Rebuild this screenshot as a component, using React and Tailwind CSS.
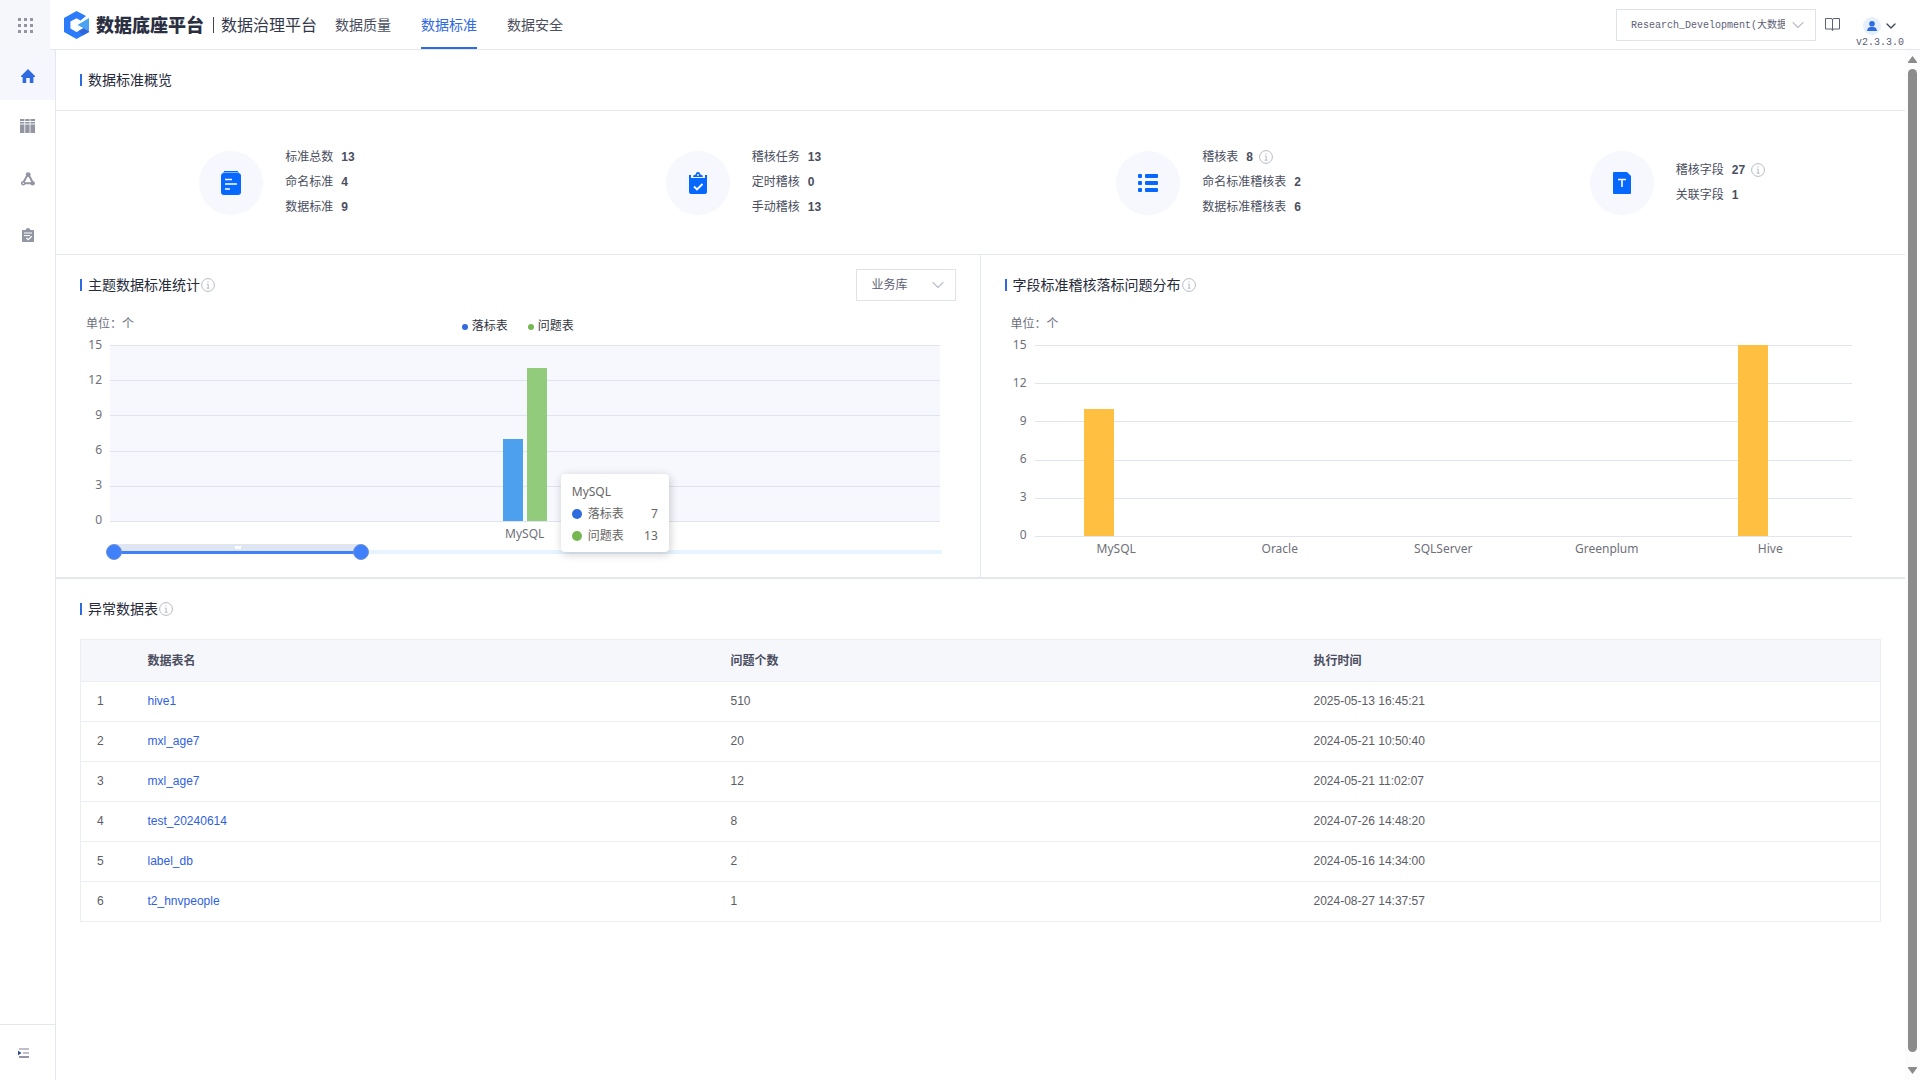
import React, { useState } from 'react';
import { ChevronDown } from 'lucide-react';

const navItems = ['数据质量', '数据标准', '数据安全'];

const themeSeries = [
  { name: '落标表', value: 7, dot: 'bg-[#2f6adf]', bar: 'bg-[#4ca0ee]' },
  { name: '问题表', value: 13, dot: 'bg-[#76b752]', bar: 'bg-[#91cb7b]' }
];

const issueData = [
  { name: 'MySQL', value: 10 },
  { name: 'Oracle', value: 0 },
  { name: 'SQLServer', value: 0 },
  { name: 'Greenplum', value: 0 },
  { name: 'Hive', value: 15 }
];

const ticks = [15, 12, 9, 6, 3, 0];
const maxTick = 15;

const tableRows = [
  { name: 'hive1', count: 510, time: '2025-05-13 16:45:21' },
  { name: 'mxl_age7', count: 20, time: '2024-05-21 10:50:40' },
  { name: 'mxl_age7', count: 12, time: '2024-05-21 11:02:07' },
  { name: 'test_20240614', count: 8, time: '2024-07-26 14:48:20' },
  { name: 'label_db', count: 2, time: '2024-05-16 14:34:00' },
  { name: 't2_hnvpeople', count: 1, time: '2024-08-27 14:37:57' }
];

const Logo = () => (
  <svg viewBox="0 0 26 28" className="w-[26px] h-7">
    <path d="M12.5 0 L22 5 L16.5 9.5 L12.5 7.2 L6.4 10.6 V17.6 L12.5 21 L15.5 19.4 L25 20.6 V21 L12.5 28 L0 21 V7 Z" fill="#2b7bfa" />
    <path d="M25 7 V20 L13.5 14 Z" fill="#4aa3f0" />
    <path d="M15 19.6 L19.5 17.1 L25 20 V21 L18.5 24.6 Z" fill="#2f66dc" />
  </svg>
);

const InfoIcon = () => (
  <svg viewBox="0 0 14 14" className="w-3.5 h-3.5 shrink-0" fill="none" stroke="#b7bac4">
    <circle cx="7" cy="7" r="6.4" />
    <path d="M7 3.4 V4.6 M5.8 6.2 H7.2 V10 M5.6 10.2 H8.6" />
  </svg>
);

const DocIcon = () => (
  <svg viewBox="0 0 20 24" className="w-5 h-6">
    <rect x="3" y="0" width="14" height="1.4" fill="#0668ff" />
    <rect x="2" y="1" width="16" height="2" fill="#7fb2ff" />
    <rect x="0" y="2" width="20" height="22" rx="3" fill="#0668ff" />
    <path d="M4 8.5 H11 M4 13 H16 M4 18 H9" stroke="#fff" strokeWidth="1.6" />
  </svg>
);

const TaskIcon = () => (
  <svg viewBox="0 0 18 22" className="w-[18px] h-[22px]">
    <path d="M0 3 H2 V6 H16 V3 H18 V20 Q18 22 16 22 H2 Q0 22 0 20 Z" fill="#0668ff" />
    <path d="M4 5 Q4 2.6 6.6 2.4 Q7 0 9 0 Q11 0 11.4 2.4 Q14 2.6 14 5 Z" fill="#0668ff" />
    <circle cx="9" cy="3" r="0.9" fill="#fff" />
    <path d="M5 14.5 L8 17.5 L13.5 12" fill="none" stroke="#fff" strokeWidth="1.8" />
  </svg>
);

const ListIcon = () => (
  <svg viewBox="0 0 20 18" className="w-5 h-[18px]" fill="#0668ff">
    <rect x="0" y="0" width="4" height="4" rx="1" />
    <rect x="7" y="0" width="13" height="4" rx="1" />
    <rect x="0" y="7" width="4" height="4" rx="1" />
    <rect x="7" y="7" width="13" height="4" rx="1" />
    <rect x="0" y="14" width="4" height="4" rx="1" />
    <rect x="7" y="14" width="13" height="4" rx="1" />
  </svg>
);

const FieldIcon = () => (
  <svg viewBox="0 0 18 22" className="w-[18px] h-[22px]">
    <path d="M1 0 H14 L18 4 V21 Q18 22 17 22 H1 Q0 22 0 21 V1 Q0 0 1 0 Z" fill="#0668ff" />
    <path d="M5 7.5 H13 M9 7.5 V15" stroke="#fff" strokeWidth="1.6" />
  </svg>
);

const HomeIcon = () => (
  <svg viewBox="0 0 14 14" className="w-3.5 h-3.5" fill="#2f6adf">
    <path d="M7 0 L14 7 V8 H12.4 V14 H8.8 V9 H5.2 V14 H1.6 V8 H0 V7 Z" />
  </svg>
);

const ShelfIcon = () => (
  <svg viewBox="0 0 15 14" className="w-[15px] h-3.5">
    <path d="M0 0 H4.4 V14 H0 Z M5.2 0 H9.6 V14 H5.2 Z M10.4 0 H15 V14 H10.4 Z" fill="#9395a3" />
    <path d="M0 2.5 H15 M0 5 H15" stroke="#fff" strokeWidth="0.9" />
  </svg>
);

const NodesIcon = () => (
  <svg viewBox="0 0 14 14" className="w-3.5 h-3.5" fill="none" stroke="#9395a3">
    <path d="M6.5 3 L2.6 10 M7.8 3 L11.2 9.5 M3.5 11.2 H10.5" strokeWidth="2" />
    <circle cx="7.2" cy="2.6" r="2.4" fill="#9395a3" stroke="none" />
    <circle cx="2.2" cy="11.2" r="1.5" fill="#fff" strokeWidth="1.5" />
    <circle cx="11.6" cy="11.2" r="2.3" fill="#9395a3" stroke="none" />
  </svg>
);

const ClipboardIcon = () => (
  <svg viewBox="0 0 12 14" className="w-3 h-3.5">
    <path d="M0 2 H3.6 Q4 0 6 0 Q8 0 8.4 2 H12 V14 H0 Z" fill="#9395a3" />
    <path d="M2 5 H10 M2 7.6 H8" stroke="#fff" />
    <path d="M4.4 10 L6.2 11.6 L9.8 8.2" fill="none" stroke="#fff" strokeWidth="1.2" />
  </svg>
);

const ExpandIcon = () => (
  <svg viewBox="0 0 11 10" className="w-[11px] h-2.5">
    <path d="M1 1 H11 M5 5 H11" stroke="#bfc0cc" strokeWidth="2" />
    <path d="M1 9 H11" stroke="#9395a3" strokeWidth="2" />
    <path d="M0 2.8 L3.6 5 L0 7.2 Z" fill="#2c4a80" />
  </svg>
);

const BookIcon = () => (
  <svg viewBox="0 0 15 13" className="w-[15px] h-[13px]" fill="none" stroke="#5c6075">
    <path d="M0.5 0.5 H6 Q7.5 0.5 7.5 2 Q7.5 0.5 9 0.5 H14.5 V11 H9 Q7.5 11 7.5 12.5 Q7.5 11 6 11 H0.5 Z M7.5 2 V12" />
  </svg>
);

const sideItems = [
  { label: '首页', icon: HomeIcon, className: 'h-[50px] pt-0.5 bg-[#f6f7fd]' },
  { label: '标准库', icon: ShelfIcon, className: 'h-[52px]' },
  { label: '映射', icon: NodesIcon, className: 'h-[54px]' },
  { label: '稽核', icon: ClipboardIcon, className: 'h-[58px]' }
];

const overview = [
  { icon: DocIcon, width: 'w-[94px]', rows: [['标准总数', 13], ['命名标准', 4], ['数据标准', 9]] },
  { icon: TaskIcon, width: 'w-[78px]', rows: [['稽核任务', 13], ['定时稽核', 0], ['手动稽核', 13]] },
  { icon: ListIcon, width: 'w-[101px]', rows: [['稽核表', 8, true], ['命名标准稽核表', 2], ['数据标准稽核表', 6]] },
  { icon: FieldIcon, width: 'w-[86px]', rows: [['稽核字段', 27, true], ['关联字段', 1]] }
];

const SectionTitle = ({ children, info }) => (
  <h2 className="flex items-center text-sm text-[#262a3a]">
    <span className="w-0.5 h-3 bg-[#2f6adf] mr-1.5" />
    <span className="mr-px">{children}</span>
    {info && <InfoIcon />}
  </h2>
);

// Tick labels, grid lines and bars share one row height
const Plot = ({ className, plotClassName, children }) => (
  <div className={`flex ${className}`}>
    <div className="w-[22px] mr-2 -mt-px mb-px flex flex-col justify-between text-right">
      {ticks.map((tick) => (
        <span key={tick} className="h-px flex items-center justify-end">{tick}</span>
      ))}
    </div>
    <div className={`relative flex-1 flex flex-col justify-between ${plotClassName}`}>
      {ticks.map((tick) => (
        <span key={tick} className="h-px bg-[#dfe4ef]" />
      ))}
      {children}
    </div>
  </div>
);

const thumb =
  'absolute inset-x-0 top-0 w-full h-4 m-0 appearance-none bg-transparent pointer-events-none [&::-webkit-slider-thumb]:appearance-none [&::-webkit-slider-thumb]:pointer-events-auto [&::-webkit-slider-thumb]:w-4 [&::-webkit-slider-thumb]:h-4 [&::-webkit-slider-thumb]:rounded-full [&::-webkit-slider-thumb]:bg-[#4080fb] [&::-webkit-slider-thumb]:border [&::-webkit-slider-thumb]:border-[#6f93d2]';

const ThemeChart = () => {
  const [start, setStart] = useState(0);
  const [end, setEnd] = useState(30);

  return (
    <section className="w-1/2 pt-3.5 px-6 pb-[17px] border-r border-[#e4e7ed]">
      <div className="flex items-center justify-between h-8">
        <SectionTitle info>主题数据标准统计</SectionTitle>
        <div className="relative">
          <select
            aria-label="数据库类型"
            className="appearance-none w-[100px] h-8 pl-[15px] pr-8 border border-[#dfe2ea] bg-white text-xs text-[#5c6075]"
          >
            <option>业务库</option>
          </select>
          <ChevronDown className="absolute right-2 top-1.5 w-5 h-5 text-[#b9bfcc] pointer-events-none" strokeWidth={1.3} />
        </div>
      </div>

      <div className="relative mt-3.5 h-[18px] flex items-center pl-1.5 text-xs text-[#6b6e7c]">
        <span>单位：个</span>
        {/* Legend */}
        <div className="absolute inset-0 pt-1 flex items-center justify-center gap-5 text-[#30333f]">
          {themeSeries.map((item) => (
            <span key={item.name} className="flex items-center gap-1">
              <span className={`w-1.5 h-1.5 mt-0.5 rounded-full ${item.dot}`} />
              {item.name}
            </span>
          ))}
        </div>
      </div>

      <div className="font-['Noto_Sans','Noto_Sans_CJK_SC',sans-serif] text-xs text-[#6e7079]">
        <Plot className="mt-3 h-[177px] mr-4" plotClassName="bg-[#f6f8fd]">
          <div className="absolute inset-0 bottom-px flex items-end justify-center gap-1">
            {themeSeries.map((item) => (
              <span
                key={item.name}
                className={`w-5 ${item.bar}`}
                style={{ height: `${(item.value / maxTick) * 100}%` }}
              />
            ))}
          </div>
          {/* Tooltip */}
          <div className="absolute left-1/2 top-[129px] ml-9 w-[108px] h-[78px] z-10 px-[11px] py-[7px] rounded bg-white shadow-[1px_2px_10px_rgba(0,0,0,0.2)] text-[#666666] leading-[22px]">
            <div>MySQL</div>
            {themeSeries.map((item) => (
              <div key={item.name} className="flex items-center">
                <span className={`w-2.5 h-2.5 rounded-full mr-1.5 ${item.dot}`} />
                <span className="flex-1">{item.name}</span>
                <span>{item.value}</span>
              </div>
            ))}
          </div>
        </Plot>
        <div className="h-[22px] pt-0.5 pl-[30px] mr-4 flex items-center justify-center">MySQL</div>
      </div>

      {/* Data zoom */}
      <div className="relative h-4 ml-[26px] mr-2.5">
        <div className="absolute inset-x-0 top-1.5 h-1 mx-1 bg-[#e6f4ff]" />
        <div className="relative mx-2">
          <div
            className="h-2.5 bg-[#dfe5f1] border-b-3 border-[#4080fb] flex justify-center items-center"
            style={{ marginLeft: `${start}%`, width: `${end - start}%` }}
          >
            <span className="w-1.5 h-[3px] bg-white" />
          </div>
        </div>
        <input type="range" aria-label="起始" value={start} onChange={(e) => setStart(Math.min(Number(e.target.value), end))} className={thumb} />
        <input type="range" aria-label="结束" value={end} onChange={(e) => setEnd(Math.max(Number(e.target.value), start))} className={thumb} />
      </div>
    </section>
  );
};

const IssueChart = () => (
  <section className="w-1/2 pt-3.5 px-6">
    <div className="flex items-center h-8">
      <SectionTitle info>字段标准稽核落标问题分布</SectionTitle>
    </div>
    <div className="mt-3.5 h-[18px] flex items-center pl-1.5 text-xs text-[#6b6e7c]">单位：个</div>
    <div className="font-['Noto_Sans','Noto_Sans_CJK_SC',sans-serif] text-xs text-[#6e7079]">
      <Plot className="mt-3 h-48 mr-[29px]" plotClassName="">
        <div className="absolute inset-0 bottom-px flex">
          {issueData.map((item) => (
            <div key={item.name} className="flex-1 flex items-end justify-center pr-[34px]">
              <span className="w-[30px] bg-[#ffbf40]" style={{ height: `${(item.value / maxTick) * 100}%` }} />
            </div>
          ))}
        </div>
      </Plot>
      <div className="h-[22px] pt-0.5 pl-[30px] mr-[29px] flex items-center">
        {issueData.map((item) => (
          <span key={item.name} className="flex-1 text-center">{item.name}</span>
        ))}
      </div>
    </div>
  </section>
);

const Header = () => (
  <header className="h-[50px] flex">
    <button aria-label="应用" className="w-[50px] bg-[#f6f7fa] flex items-center justify-center">
      <span className="grid grid-cols-3 gap-[3px]">
        {Array.from({ length: 9 }, (_, i) => (
          <span key={i} className="w-[3px] h-[3px] bg-[#9395a3]" />
        ))}
      </span>
    </button>
    <div className="flex-1 flex items-center pl-3.5 border-b border-[#e4e7ed]">
      <Logo />
      <h1 className="ml-1.5 pt-0.5 text-lg font-black text-[#2b2f42]">数据底座平台</h1>
      <span className="w-px h-4 bg-[#42465a] ml-[9px] mr-[7px]" />
      <span className="pt-0.5 text-base text-[#33374a]">数据治理平台</span>
      <nav className="ml-[18px] h-full flex gap-[30px] text-sm">
        {navItems.map((item) => (
          <a
            key={item}
            href="#"
            className={`h-[49px] pt-0.5 flex items-center border-b-2 ${
              item === '数据标准' ? 'text-[#2f6adf] border-[#2f6adf]' : 'text-[#4a4e60] border-transparent'
            }`}
          >
            {item}
          </a>
        ))}
      </nav>

      <div className="relative ml-auto">
        <select
          aria-label="项目"
          className="appearance-none w-[200px] h-8 pt-0.5 pl-3.5 pr-[30px] border border-[#dfe2ea] bg-white font-['Liberation_Mono','Noto_Sans_CJK_SC',monospace] text-[10px] text-[#5c6075]"
        >
          <option>Research_Development(大数据研发)</option>
        </select>
        <ChevronDown className="absolute right-2 top-1.5 w-5 h-5 text-[#b9bfcc] pointer-events-none" strokeWidth={1.3} />
      </div>
      <button aria-label="文档" className="ml-[9px]">
        <BookIcon />
      </button>
      <div className="ml-4 mr-4 pt-[18px] flex flex-col items-center">
        <button aria-label="用户" className="flex items-center gap-0.5 pl-0.5">
          <span className="w-[18px] h-[18px] rounded-full bg-[#e6f0fc] flex items-center justify-center">
            <svg viewBox="0 0 10 10" className="w-2.5 h-2.5" fill="#2f6adf">
              <circle cx="5" cy="2.8" r="2.8" />
              <path d="M0 10 Q0.4 6.6 3 6 H7 Q9.6 6.6 10 10 Z" />
            </svg>
          </span>
          <ChevronDown className="w-4 h-4 text-[#42465a]" />
        </button>
        <span className="font-['Liberation_Mono',monospace] text-[10px] leading-4 text-[#5c6075]">v2.3.3.0</span>
      </div>
    </div>
  </header>
);

const Sidebar = () => (
  <aside className="w-14 shrink-0 flex flex-col border-r border-[#e4e7ed]">
    {sideItems.map(({ label, icon: Icon, className }) => (
      <button key={label} aria-label={label} className={`flex items-center justify-center ${className}`}>
        <Icon />
      </button>
    ))}
    <button aria-label="展开菜单" className="mt-auto h-14 pr-2 flex items-center justify-center border-t border-[#e4e7ed]">
      <ExpandIcon />
    </button>
  </aside>
);

const App = () => {
  return (
    <div className="h-screen flex flex-col bg-white font-['Liberation_Sans','Noto_Sans_CJK_SC',sans-serif] text-[#4a4e60]">
      <Header />
      <div className="flex-1 min-h-0 flex">
        <Sidebar />
        <main className="flex-1 overflow-hidden">
          <div className="h-[61px] px-6 flex items-center border-b border-[#e4e7ed]">
            <SectionTitle>数据标准概览</SectionTitle>
          </div>

          {/* Overview */}
          <div className="h-36 flex items-center justify-around border-b border-[#e4e7ed]">
            {overview.map(({ icon: Icon, width, rows }) => (
              <div key={rows[0][0]} className="flex items-center gap-[22px]">
                <div className="w-16 h-16 rounded-full bg-[#f6f8fe] flex items-center justify-center">
                  <Icon />
                </div>
                <ul className={`pb-px text-xs whitespace-nowrap ${width}`}>
                  {rows.map(([label, value, info]) => (
                    <li key={label} className="h-[25px] flex items-center">
                      {label}
                      <strong className="ml-2 mr-1.5">{value}</strong>
                      {info && <InfoIcon />}
                    </li>
                  ))}
                </ul>
              </div>
            ))}
          </div>

          {/* Charts */}
          <div className="flex border-b-2 border-[#e4e7ed]">
            <ThemeChart />
            <IssueChart />
          </div>

          {/* Abnormal tables */}
          <section className="px-6 pb-6">
            <div className="h-[60px] flex items-center">
              <SectionTitle info>异常数据表</SectionTitle>
            </div>
            <table className="w-full table-fixed border border-[#ebeef5] text-xs text-left">
              <thead>
                <tr className="h-[42px] bg-[#f6f7fa] border-b border-[#ebeef5]">
                  <th className="w-[51px]" />
                  <th className="px-4">数据表名</th>
                  <th className="px-4">问题个数</th>
                  <th className="px-4">执行时间</th>
                </tr>
              </thead>
              <tbody>
                {tableRows.map((row, index) => (
                  <tr key={row.time} className="h-10 border-b border-[#ebeef5] text-[#5b5d66]">
                    <td className="px-4 pb-0.5">{index + 1}</td>
                    <td className="px-4 pb-0.5">
                      <a href="#" className="text-[#2f5fdc]">{row.name}</a>
                    </td>
                    <td className="px-4 pb-0.5">{row.count}</td>
                    <td className="px-4 pb-0.5">{row.time}</td>
                  </tr>
                ))}
              </tbody>
            </table>
          </section>
        </main>

        {/* Scrollbar */}
        <div className="w-[15px] py-1.5 flex flex-col items-center gap-1.5 bg-[#fcfcfc]">
          <svg viewBox="0 0 9 7" className="w-[9px] h-[7px]" fill="#8b8b8b">
            <path d="M4.5 0 L9 6 V7 H0 V6 Z" />
          </svg>
          <span className="w-[9px] flex-1 mb-[9px] rounded-full bg-[#8b8b8b]" />
          <svg viewBox="0 0 9 7" className="w-[9px] h-[7px]" fill="#8b8b8b">
            <path d="M4.5 7 L9 1 V0 H0 V1 Z" />
          </svg>
        </div>
      </div>
    </div>
  );
};

export default App;
